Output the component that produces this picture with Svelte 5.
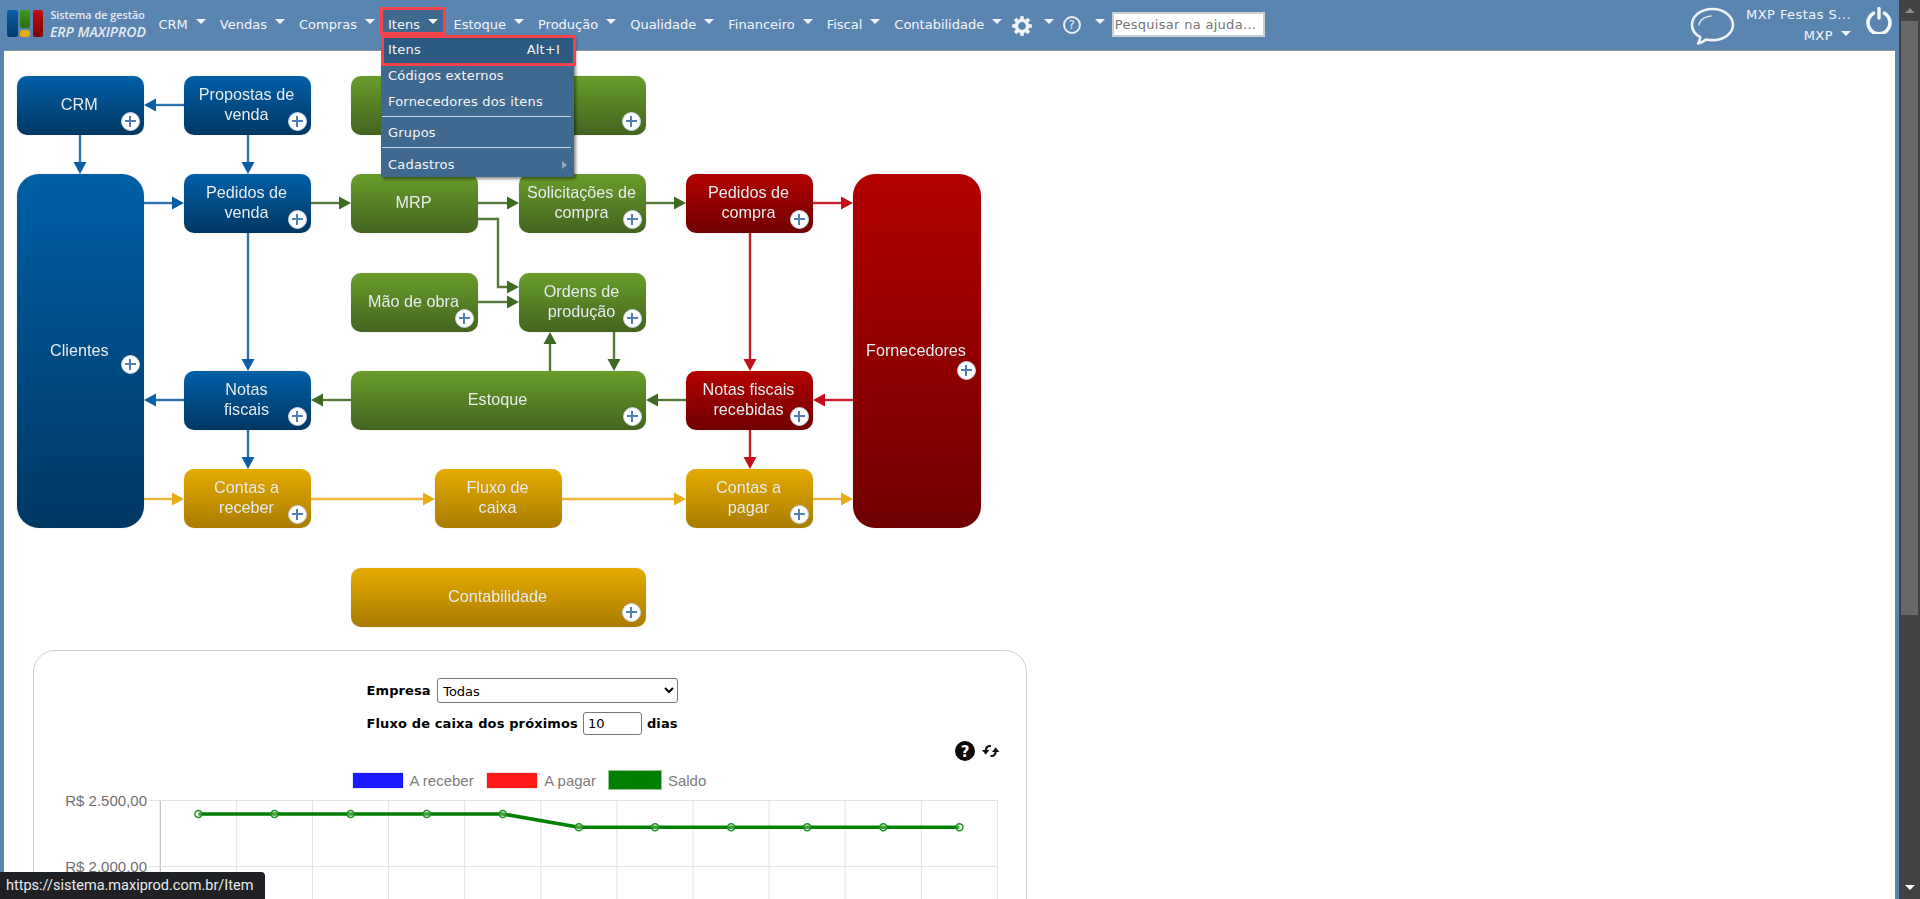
<script>
  const navItems = ['CRM', 'Vendas', 'Compras', 'Itens', 'Estoque', 'Produção', 'Qualidade', 'Financeiro', 'Fiscal', 'Contabilidade'];
  const nodes = [
    { t: ['CRM'], x: 16.5, y: 76, w: 127.5, h: 59, c: 'blue', p: [130, 121] },
    { t: ['Propostas de', 'venda'], x: 184, y: 76, w: 127, h: 59, c: 'blue', p: [297, 121] },
    { t: [''], x: 351, y: 76, w: 295, h: 59, c: 'green', p: [631, 121] },
    { t: ['Clientes'], x: 16.5, y: 174, w: 127.5, h: 354, c: 'blue', r: 20, p: [130, 364] },
    { t: ['Pedidos de', 'venda'], x: 184, y: 174, w: 127, h: 59, c: 'blue', p: [297, 219] },
    { t: ['MRP'], x: 351, y: 174, w: 127, h: 59, c: 'green' },
    { t: ['Solicitações de', 'compra'], x: 519, y: 174, w: 127, h: 59, c: 'green', p: [632, 219] },
    { t: ['Pedidos de', 'compra'], x: 686, y: 174, w: 127, h: 59, c: 'red', p: [799, 219] },
    { t: ['Fornecedores'], x: 853, y: 174, w: 128, h: 354, c: 'red', r: 20, p: [966, 370] },
    { t: ['Mão de obra'], x: 351, y: 273, w: 127, h: 59, c: 'green', p: [464, 318] },
    { t: ['Ordens de', 'produção'], x: 519, y: 273, w: 127, h: 59, c: 'green', p: [632, 318] },
    { t: ['Notas', 'fiscais'], x: 184, y: 371, w: 127, h: 59, c: 'blue', p: [297, 416] },
    { t: ['Estoque'], x: 351, y: 371, w: 295, h: 59, c: 'green', p: [632, 416] },
    { t: ['Notas fiscais', 'recebidas'], x: 686, y: 371, w: 127, h: 59, c: 'red', p: [799, 416] },
    { t: ['Contas a', 'receber'], x: 184, y: 469, w: 127, h: 59, c: 'yellow', p: [297, 514] },
    { t: ['Fluxo de', 'caixa'], x: 435, y: 469, w: 127, h: 59, c: 'yellow' },
    { t: ['Contas a', 'pagar'], x: 686, y: 469, w: 127, h: 59, c: 'yellow', p: [799, 514] },
    { t: ['Contabilidade'], x: 351, y: 568, w: 295, h: 59, c: 'yellow', p: [631, 612] }
  ];
  const tones = {
    blue: ['#2a72b0', '#0a5ea6'],
    green: ['#55793a', '#3f6b20'],
    red: ['#c8202a', '#c40f1a'],
    yellow: ['#efb63c', '#e9ad14']
  };
  const arrows = [
    ['blue', [[184, 105], [144, 105]]],
    ['blue', [[80, 135], [80, 174]]],
    ['blue', [[248, 135], [248, 174]]],
    ['blue', [[144, 203], [184, 203]]],
    ['blue', [[248, 233], [248, 371]]],
    ['blue', [[184, 400], [144, 400]]],
    ['blue', [[248, 430], [248, 469]]],
    ['green', [[311, 203], [351, 203]]],
    ['green', [[478, 203], [519, 203]]],
    ['green', [[478, 219], [498, 219], [498, 287], [519, 287]]],
    ['green', [[478, 302], [519, 302]]],
    ['green', [[646, 203], [686, 203]]],
    ['green', [[550, 371], [550, 332]]],
    ['green', [[614, 332], [614, 371]]],
    ['green', [[351, 400], [311, 400]]],
    ['green', [[686, 400], [646, 400]]],
    ['red', [[813, 203], [853, 203]]],
    ['red', [[750, 233], [750, 371]]],
    ['red', [[853, 400], [813, 400]]],
    ['red', [[750, 430], [750, 469]]],
    ['yellow', [[144, 499], [184, 499]]],
    ['yellow', [[311, 499], [435, 499]]],
    ['yellow', [[562, 499], [686, 499]]],
    ['yellow', [[813, 499], [853, 499]]]
  ];
  function head(pts) {
    const [a, b] = pts.slice(-2);
    const dx = Math.sign(b[0] - a[0]);
    const dy = Math.sign(b[1] - a[1]);
    const bx = b[0] - dx * 12;
    const by = b[1] - dy * 12;
    return `${b[0]},${b[1]} ${bx - dy * 6.5},${by - dx * 6.5} ${bx + dy * 6.5},${by + dx * 6.5}`;
  }
  const line = (pts) => {
    const p = pts.map((q) => [...q]);
    const n = p.length - 1;
    p[n][0] -= Math.sign(p[n][0] - p[n - 1][0]) * 10;
    p[n][1] -= Math.sign(p[n][1] - p[n - 1][1]) * 10;
    return p.map((q) => q.join(',')).join(' ');
  };
  const gridX = Array.from({ length: 12 }, (_, i) => 159.3 + 76.1 * i);
  const values = [814, 814, 814, 814, 814, 827.3, 827.3, 827.3, 827.3, 827.3, 827.3];
  const points = values.map((y, i) => [197.4 + 76.1 * i, y]);
  const teeth = [0, 45, 90, 135, 180, 225, 270, 315];
</script>

<div class="page">
  <div class="main">
    <header class="nav">
      <div class="logo">
        <div class="bars">
          <span class="bar b1"></span>
          <span class="stack"><span class="bar b2"></span><span class="bar b3"></span></span>
          <span class="bar b4"></span>
        </div>
        <div class="brand">
          <span class="brand-top">Sistema de gestão</span>
          <span class="brand-name">ERP MAXIPROD</span>
        </div>
      </div>

      {#each navItems as item}
        <div class="item" class:active={item === 'Itens'}>
          <span>{item}</span><i class="caret"></i>
          {#if item === 'Itens'}
            <div class="menu">
              <div class="row current"><span>Itens</span><span>Alt+I</span></div>
              <div class="row second">Códigos externos</div>
              <div class="row">Fornecedores dos itens</div>
              <hr />
              <div class="row">Grupos</div>
              <hr />
              <div class="row last"><span>Cadastros</span><i class="sub"></i></div>
            </div>
          {/if}
        </div>
      {/each}

      <div class="tool gear-tool">
        <svg width="20" height="20" viewBox="-10 -10 20 20" aria-hidden="true">
          <circle r="5.6" fill="none" stroke="#f1f4f7" stroke-width="3.4" />
          {#each teeth as deg}
            <rect x="-1.8" y="-9.8" width="3.6" height="3.6" fill="#f1f4f7" transform="rotate({deg})" />
          {/each}
        </svg>
        <i class="caret"></i>
      </div>
      <div class="tool help-tool">
        <span class="ring">?</span>
        <i class="caret"></i>
      </div>
      <input class="search" placeholder="Pesquisar na ajuda..." />

      <div class="right">
        <svg class="chat" width="46" height="40" viewBox="0 0 46 40" aria-hidden="true">
          <path d="M8 37.5c3.4-.6 6-2 8-4 2 .4 4.200.6 6.500.6 11.500 0 20.500-6.700 20.500-15.300S34 3 22.500 3 2 9.700 2 18.800c0 5.300 3.200 9.700 8.300 12.400-.2 2.600-1 4.600-2.300 6.300z" fill="none" stroke="#eef3f8" stroke-width="2.600" stroke-linejoin="round" />
          <path d="M9 19c.5-5 5.500-8.500 12-9" fill="none" stroke="#dbe5ef" stroke-width="1.400" stroke-linecap="round" />
        </svg>
        <div class="user">
          <span>MXP Festas S...</span>
          <span class="company">MXP <i class="caret"></i></span>
        </div>
        <svg class="power" width="28" height="28" viewBox="0 0 28 28" aria-hidden="true">
          <path d="M8.500 7.200a11 11 0 1 0 11 0" fill="none" stroke="#f4f7fa" stroke-width="3.600" stroke-linecap="round" />
          <path d="M14 2.500v9.500" fill="none" stroke="#f4f7fa" stroke-width="3.400" stroke-linecap="round" />
        </svg>
      </div>
    </header>

    <main class="content">
      <section class="diagram">
        <svg class="links" width="1000" height="599" viewBox="4 51 1000 599" aria-hidden="true">
          {#each arrows as [tone, pts]}
            <polyline points={line(pts)} fill="none" stroke={tones[tone][0]} stroke-width="2.400" />
            <polygon points={head(pts)} fill={tones[tone][1]} />
          {/each}
        </svg>
        {#each nodes as n}
          <div
            class="node {n.c}"
            class:tall={n.r}
            style="left:{n.x - 4}px;top:{n.y - 51}px;width:{n.w}px;height:{n.h}px"
          >
            {#each n.t as text}<span>{text}</span>{/each}
            {#if n.p}
              <i class="plus" style="left:{n.p[0] - n.x - 9.500}px;top:{n.p[1] - n.y - 9.500}px"></i>
            {/if}
          </div>
        {/each}
      </section>

      <section class="card">
        <div class="form">
          <div class="field">
            <b class="company-label">Empresa</b>
            <select class="company-select"><option>Todas</option></select>
          </div>
          <div class="field days">
            <b class="spaced">Fluxo de caixa dos próximos</b>
            <input class="days-input" value="10" />
            <b class="spaced">dias</b>
          </div>
        </div>
        <div class="actions">
          <svg width="20" height="20" viewBox="0 0 20 20" aria-hidden="true">
            <circle cx="10" cy="10" r="10" fill="#0a0a0a" />
            <text x="10" y="15.500" text-anchor="middle" fill="#fff" class="qmark">?</text>
          </svg>
          <svg class="refresh" width="18" height="14" viewBox="0 0 18 14" aria-hidden="true">
            <path d="M9 2.200C6 1.400 4 3 3.800 6.500" fill="none" stroke="#111" stroke-width="2.200" />
            <path d="M0 6h7.400L3.700 10.800z" fill="#111" />
            <path d="M8.500 11.800c3 .8 5-.8 5.200-4.300" fill="none" stroke="#111" stroke-width="2.200" />
            <path d="M10 8h7.400L13.700 3.200z" fill="#111" />
          </svg>
        </div>
        <div class="legend">
          <i class="swatch s-blue"></i><span class="l1">A receber</span>
          <i class="swatch s-red"></i><span class="l2">A pagar</span>
          <i class="swatch s-green"></i><span>Saldo</span>
        </div>
        <svg class="chart" width="992" height="106" viewBox="33 795 992 106" aria-label="Fluxo de caixa">
          {#each gridX as x, i}
            <line x1={x} y1="800.500" x2={x} y2="901" stroke={i === 0 ? '#b4b4b4' : '#e2e2e2'} />
          {/each}
          <line x1="148" y1="800.500" x2="997" y2="800.500" stroke="#e2e2e2" />
          <line x1="148" y1="866.500" x2="997" y2="866.500" stroke="#e2e2e2" />
          <text x="146" y="805.500" text-anchor="end" class="tick">R$ 2.500,00</text>
          <text x="146" y="871.500" text-anchor="end" class="tick">R$ 2.000,00</text>
          <polyline points={points.map((p) => p.join(',')).join(' ')} fill="none" stroke="#008000" stroke-width="3.600" />
          {#each points as [x, y]}
            <circle cx={x} cy={y} r="3.500" fill="rgba(255,255,255,.25)" stroke="#1c931c" stroke-width="1.500" />
          {/each}
        </svg>
      </section>
    </main>
  </div>

  <aside class="scrollbar" aria-hidden="true">
    <i class="sb-up"></i>
    <i class="sb-thumb"></i>
    <i class="sb-down"></i>
  </aside>

  <div class="status">https://sistema.maxiprod.com.br/Item</div>
</div>

<style>
  :global(body) {
    margin: 0;
    overflow: hidden;
    background: #5b85b1;
  }
  .page {
    display: flex;
    height: 899px;
    position: relative;
    overflow: hidden;
    font-family: "DejaVu Sans", Verdana, sans-serif;
    font-size: 13px;
  }
  .main {
    flex: 1;
    min-width: 0;
    background: #5b85b1;
    display: flex;
    flex-direction: column;
  }
  .nav {
    height: 50px;
    flex: none;
    display: flex;
    align-items: flex-start;
    color: #f3f6fa;
  }
  .logo {
    width: 144.500px;
    margin-left: 7px;
    height: 50px;
    display: flex;
    gap: 6.500px;
    flex: none;
  }
  .bars {
    display: flex;
    gap: 2.300px;
    margin-top: 10px;
    height: 27px;
  }
  .bar {
    display: block;
    width: 10.600px;
    border-radius: 2.500px;
  }
  .stack {
    display: flex;
    flex-direction: column;
    gap: 2px;
  }
  .b1 { background: linear-gradient(#0a5ea6, #053b6d); }
  .b2 { height: 18px; background: linear-gradient(#3f9a1c, #2d6d12); }
  .b3 { height: 7px; background: #e5ac12; }
  .b4 { background: linear-gradient(#c50d0d, #7b0000); }
  .brand {
    display: flex;
    flex-direction: column;
    font-family: "Open Sans", sans-serif;
    color: #e4ebf2;
    margin-top: 8px;
    white-space: nowrap;
  }
  .brand-top {
    font-size: 10.800px;
    font-weight: 600;
    line-height: 14px;
    padding-left: .5px;
  }
  .brand-name {
    font-size: 14px;
    font-weight: 600;
    font-style: italic;
    line-height: 17px;
    margin-top: 1px;
  }
  .item {
    position: relative;
    margin-top: 8px;
    height: 26px;
    box-sizing: border-box;
    padding: 9px 7px 0;
    display: flex;
    align-items: flex-start;
    line-height: 16px;
    white-space: nowrap;
  }
  .caret {
    display: block;
    width: 0;
    height: 0;
    border-left: 5px solid transparent;
    border-right: 5px solid transparent;
    border-top: 5px solid #f3f6fa;
  }
  .item .caret {
    margin: 2px 0 0 8px;
  }
  .item.active {
    margin-left: -1px;
    margin-right: 1.500px;
    background: #40698f;
    outline: 3px solid #f44349;
    outline-offset: -2px;
  }
  .menu {
    position: absolute;
    left: 0;
    top: 27px;
    width: 193px;
    background: #40698f;
    box-shadow: 2px 2px 3px rgba(0, 0, 0, .45);
    letter-spacing: .2px;
    z-index: 5;
  }
  .row {
    height: 26px;
    padding: 2px 8px 0 7px;
    box-sizing: border-box;
    display: flex;
    align-items: center;
    justify-content: space-between;
    line-height: 16px;
  }
  .row.current {
    height: 31px;
    width: 195px;
    padding: 0 16px 2px 7px;
    background: #2d5a80;
    outline: 3px solid #f44349;
    outline-offset: -3px;
    margin-bottom: -4px;
    position: relative;
  }
  .row.last {
    margin-top: 4px;
    height: 25px;
    padding-top: 0;
  }
  .menu hr {
    border: 0;
    border-top: 1px solid #c9d3dd;
    margin: 2px 3px 2px 1px;
  }
  .sub {
    display: block;
    width: 0;
    height: 0;
    border-top: 4.500px solid transparent;
    border-bottom: 4.500px solid transparent;
    border-left: 5px solid #93a8bf;
    margin-right: -1px;
  }
  .tool {
    display: flex;
    align-items: flex-start;
    flex: none;
  }
  .gear-tool {
    margin: 16px 0 0 2.500px;
  }
  .gear-tool .caret {
    margin: 3px 0 0 12px;
  }
  .help-tool {
    margin: 16px 0 0 9px;
  }
  .ring {
    box-sizing: border-box;
    width: 18px;
    height: 18px;
    border-radius: 50%;
    border: 2px solid #e8eef4;
    margin-top: 0;
    font-size: 12px;
    line-height: 14px;
    text-align: center;
    color: #e8eef4;
  }
  .help-tool .caret {
    margin: 3px 0 0 14px;
  }
  .search {
    margin: 12px 0 0 7px;
    width: 153.500px;
    height: 25px;
    box-sizing: border-box;
    border: 2px solid #c9ced3;
    padding: 0 1px;
    font: 13px "DejaVu Sans", Verdana, sans-serif;
    letter-spacing: .3px;
    background: #fff;
    flex: none;
  }
  .search::placeholder {
    color: #757575;
  }
  .right {
    margin-left: auto;
    margin-right: 2px;
    display: flex;
    align-items: flex-start;
    width: 206px;
    flex: none;
  }
  .chat {
    margin-top: 6px;
    margin-left: -1px;
    flex: none;
  }
  .user {
    display: flex;
    flex-direction: column;
    align-items: flex-end;
    width: 103px;
    margin: 7px 0 0 12px;
    line-height: 16px;
    letter-spacing: .45px;
    white-space: nowrap;
    flex: none;
  }
  .company {
    display: flex;
    align-items: flex-start;
    margin-top: 5px;
  }
  .company .caret {
    margin: 3px 0 0 8px;
  }
  .power {
    margin: 6px 0 0 14px;
    flex: none;
  }
  .content {
    flex: 1;
    min-height: 0;
    margin: 0 4px;
    background: #fff;
    border-top: 1px solid #8f9498;
    overflow: hidden;
  }
  .diagram {
    position: relative;
    height: 599px;
    filter: blur(.35px);
  }
  .links {
    position: absolute;
    left: 0;
    top: 0;
  }
  .node {
    position: absolute;
    box-sizing: border-box;
    border-radius: 10px;
    padding: 0 2px 3px 0;
    display: flex;
    flex-direction: column;
    justify-content: center;
    align-items: center;
    font-family: "Liberation Sans", Arial, sans-serif;
    font-size: 16.200px;
    line-height: 20px;
    color: #e6ecef;
    box-shadow: 0 0 1px rgba(0, 0, 0, .35);
    white-space: nowrap;
  }
  .node.tall { border-radius: 22px; }
  .blue { background: linear-gradient(#005fa7, #003763); }
  .green { background: linear-gradient(#699d2a, #436420); }
  .red { background: linear-gradient(#b30000, #700000); }
  .yellow { background: linear-gradient(#e5ab00, #a97c00); }
  .plus {
    position: absolute;
    width: 19px;
    height: 19px;
    box-sizing: border-box;
    border-radius: 50%;
    background: #fff;
    border: 1px solid #c5d3e6;
  }
  .plus::before,
  .plus::after {
    content: "";
    position: absolute;
    background: #4f7fb8;
  }
  .plus::before {
    left: 3px;
    right: 3px;
    top: 7.500px;
    height: 2.200px;
  }
  .plus::after {
    top: 3px;
    bottom: 3px;
    left: 7.500px;
    width: 2.200px;
  }
  .card {
    margin-left: 28.500px;
    width: 994px;
    height: 400px;
    box-sizing: border-box;
    border: 1px solid #cfcfcf;
    border-radius: 22px;
    padding-top: 27px;
  }
  .form {
    margin-left: 333px;
    color: #000;
  }
  .field {
    display: flex;
    align-items: center;
    height: 25px;
  }
  .days {
    margin-top: 9px;
    height: 23px;
    gap: 5px;
  }
  .spaced {
    letter-spacing: .13px;
  }
  .company-label {
    margin-right: 6.500px;
    letter-spacing: .1px;
  }
  .company-select {
    width: 241px;
    height: 25px;
    font: 13px "DejaVu Sans", Verdana, sans-serif;
    background: #fff;
    border: 1px solid #767676;
    border-radius: 3px;
    padding: 1px 0 0 1px;
    color: #000;
  }
  .days-input {
    width: 59px;
    height: 23px;
    box-sizing: border-box;
    border: 1px solid #767676;
    border-radius: 3px;
    padding: 0 4px;
    font: 13px "DejaVu Sans", Verdana, sans-serif;
  }
  .actions {
    display: flex;
    justify-content: flex-end;
    align-items: flex-start;
    gap: 7px;
    height: 20px;
    margin-top: 6px;
    padding-right: 26px;
  }
  .refresh {
    margin-top: 3px;
  }
  .qmark {
    font: 700 15px "DejaVu Sans", sans-serif;
  }
  .legend {
    display: flex;
    align-items: center;
    height: 20px;
    margin-top: 9px;
    padding-left: 318px;
    font-family: "Liberation Sans", Arial, sans-serif;
    font-size: 15px;
    color: #7d7d7d;
  }
  .swatch {
    display: block;
    box-sizing: border-box;
    border: 1px solid #e6e6ff;
    height: 17px;
    flex: none;
  }
  .s-blue { width: 52px; background: #1a1aff; }
  .s-red { width: 52px; background: #ff1a1a; border-color: #ffe0e0; }
  .s-green { width: 54px; height: 20px; background: #008000; border-color: #8fc78f; }
  .legend span { margin-left: 6px; white-space: nowrap; }
  .legend .l1 { margin-right: 12.500px; }
  .legend .l2 { margin-right: 12px; }
  .chart {
    display: block;
    margin-top: 5px;
  }
  .tick {
    font: 15px "Liberation Sans", Arial, sans-serif;
    fill: #6f6f6f;
  }
  .scrollbar {
    width: 21px;
    flex: none;
    background: #424242;
    position: relative;
    display: flex;
    flex-direction: column;
    align-items: center;
  }
  .sb-up {
    width: 0;
    height: 0;
    margin-top: 8px;
    border-left: 5px solid transparent;
    border-right: 5px solid transparent;
    border-bottom: 5px solid #8a8a8a;
  }
  .sb-thumb {
    display: block;
    width: 17px;
    height: 594px;
    margin-top: 8px;
    background: #686868;
  }
  .sb-down {
    width: 0;
    height: 0;
    margin-top: auto;
    margin-bottom: 9px;
    border-left: 5px solid transparent;
    border-right: 5px solid transparent;
    border-top: 5px solid #fff;
  }
  .status {
    position: absolute;
    left: 0;
    bottom: 0;
    height: 27px;
    width: 265px;
    box-sizing: border-box;
    padding-left: 6px;
    background: #202124;
    border-top-right-radius: 4px;
    color: #e8eaed;
    font-family: Roboto, "Open Sans", sans-serif;
    font-size: 14.500px;
    line-height: 27px;
    white-space: nowrap;
    z-index: 10;
  }
</style>
